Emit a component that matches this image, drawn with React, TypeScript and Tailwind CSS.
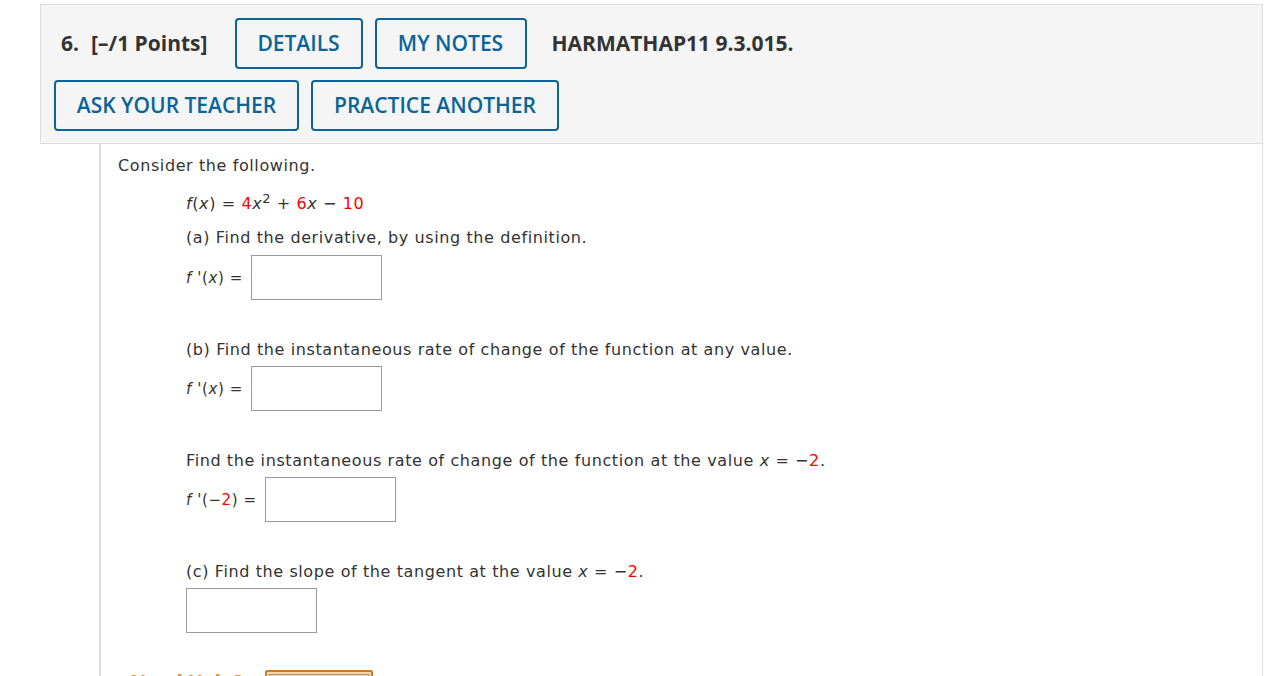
import React from "react";

const Btn = ({ children, w }: { children: React.ReactNode; w: string }) => (
  <button
    className={`h-[51px] ${w} rounded-[4px] border-2 border-[#0a6499] bg-transparent text-[21px] font-semibold text-[#0a6499]`}
  >
    {children}
  </button>
);

const Red = ({ children }: { children: React.ReactNode }) => (
  <span className="text-[#ff0000]">{children}</span>
);

const Box = () => (
  <div className="h-[45px] w-[131px] border border-[#9a9a9a] bg-white" />
);

function App() {
  return (
    <div className="min-h-[676px] bg-white font-['Open_Sans',sans-serif] text-[#333]">
      <div className="pt-[4px] pl-[40px]">
        <div className="w-[1223px] border border-[#dddddd] bg-[#f5f5f5] pt-[13px] pb-[12px] pl-[13px]">
          <div className="flex items-center">
            <span className="ml-[7px] text-[21px] font-bold text-[#333] whitespace-nowrap">
              6.<span className="ml-[12px]">[–/1 Points]</span>
            </span>
            <div className="ml-[27px] flex gap-[12px]">
              <Btn w="w-[128px]">DETAILS</Btn>
              <Btn w="w-[152px]">MY NOTES</Btn>
            </div>
            <span className="ml-[25px] text-[21px] font-bold text-[#333]">
              HARMATHAP11 9.3.015.
            </span>
          </div>
          <div className="mt-[11px] flex gap-[12px]">
            <Btn w="w-[245px]">ASK YOUR TEACHER</Btn>
            <Btn w="w-[248px]">PRACTICE ANOTHER</Btn>
          </div>
        </div>
        <div className="ml-[59px] w-[1164px] h-[540px] border-l-2 border-r border-[#dddddd] pl-[17px] pt-[10px] font-['DejaVu_Sans',Verdana,sans-serif] text-[16px] leading-[24px] tracking-[0.6px] text-[#333]">
          <div>Consider the following.</div>
          <div className="ml-[68px]">
            <div className="mt-[14px]">
              <i>f</i>(<i>x</i>) = <Red>4</Red>
              <i>x</i>
              <sup className="text-[13px] leading-none">2</sup> + <Red>6</Red>
              <i>x</i> − <Red>10</Red>
            </div>
            <div className="mt-[10px]">(a) Find the derivative, by using the definition.</div>
            <div className="mt-[5px] flex items-center gap-[8px]">
              <span className="text-[15px]">
                <i>f</i> '(<i>x</i>) =
              </span>
              <Box />
            </div>
            <div className="mt-[38px]">
              (b) Find the instantaneous rate of change of the function at any value.
            </div>
            <div className="mt-[4px] flex items-center gap-[8px]">
              <span className="text-[15px]">
                <i>f</i> '(<i>x</i>) =
              </span>
              <Box />
            </div>
            <div className="mt-[38px]">
              Find the instantaneous rate of change of the function at the value{" "}
              <i>x</i> = −<Red>2</Red>.
            </div>
            <div className="mt-[4px] flex items-center gap-[8px]">
              <span className="text-[15px]">
                <i>f</i> '(−<Red>2</Red>) =
              </span>
              <Box />
            </div>
            <div className="mt-[38px]">
              (c) Find the slope of the tangent at the value <i>x</i> = −<Red>2</Red>.
            </div>
            <div className="mt-[4px]">
              <Box />
            </div>
          </div>
          <div className="mt-[37px] ml-[12px] flex items-start gap-[22px]">
            <span className="-mt-[2px] font-['Open_Sans',sans-serif] text-[20px] leading-[28px] font-bold tracking-normal text-[#f28c28]">
              Need Help?
            </span>
            <div className="h-[30px] w-[108px] rounded-[2px] border-2 border-[#c97a2a] bg-[#fbd3a4] p-[2px]">
              <div className="h-full w-full border border-[#a09070] bg-[#e8e0d0]" />
            </div>
          </div>
        </div>
      </div>
    </div>
  );
}

export default App;
